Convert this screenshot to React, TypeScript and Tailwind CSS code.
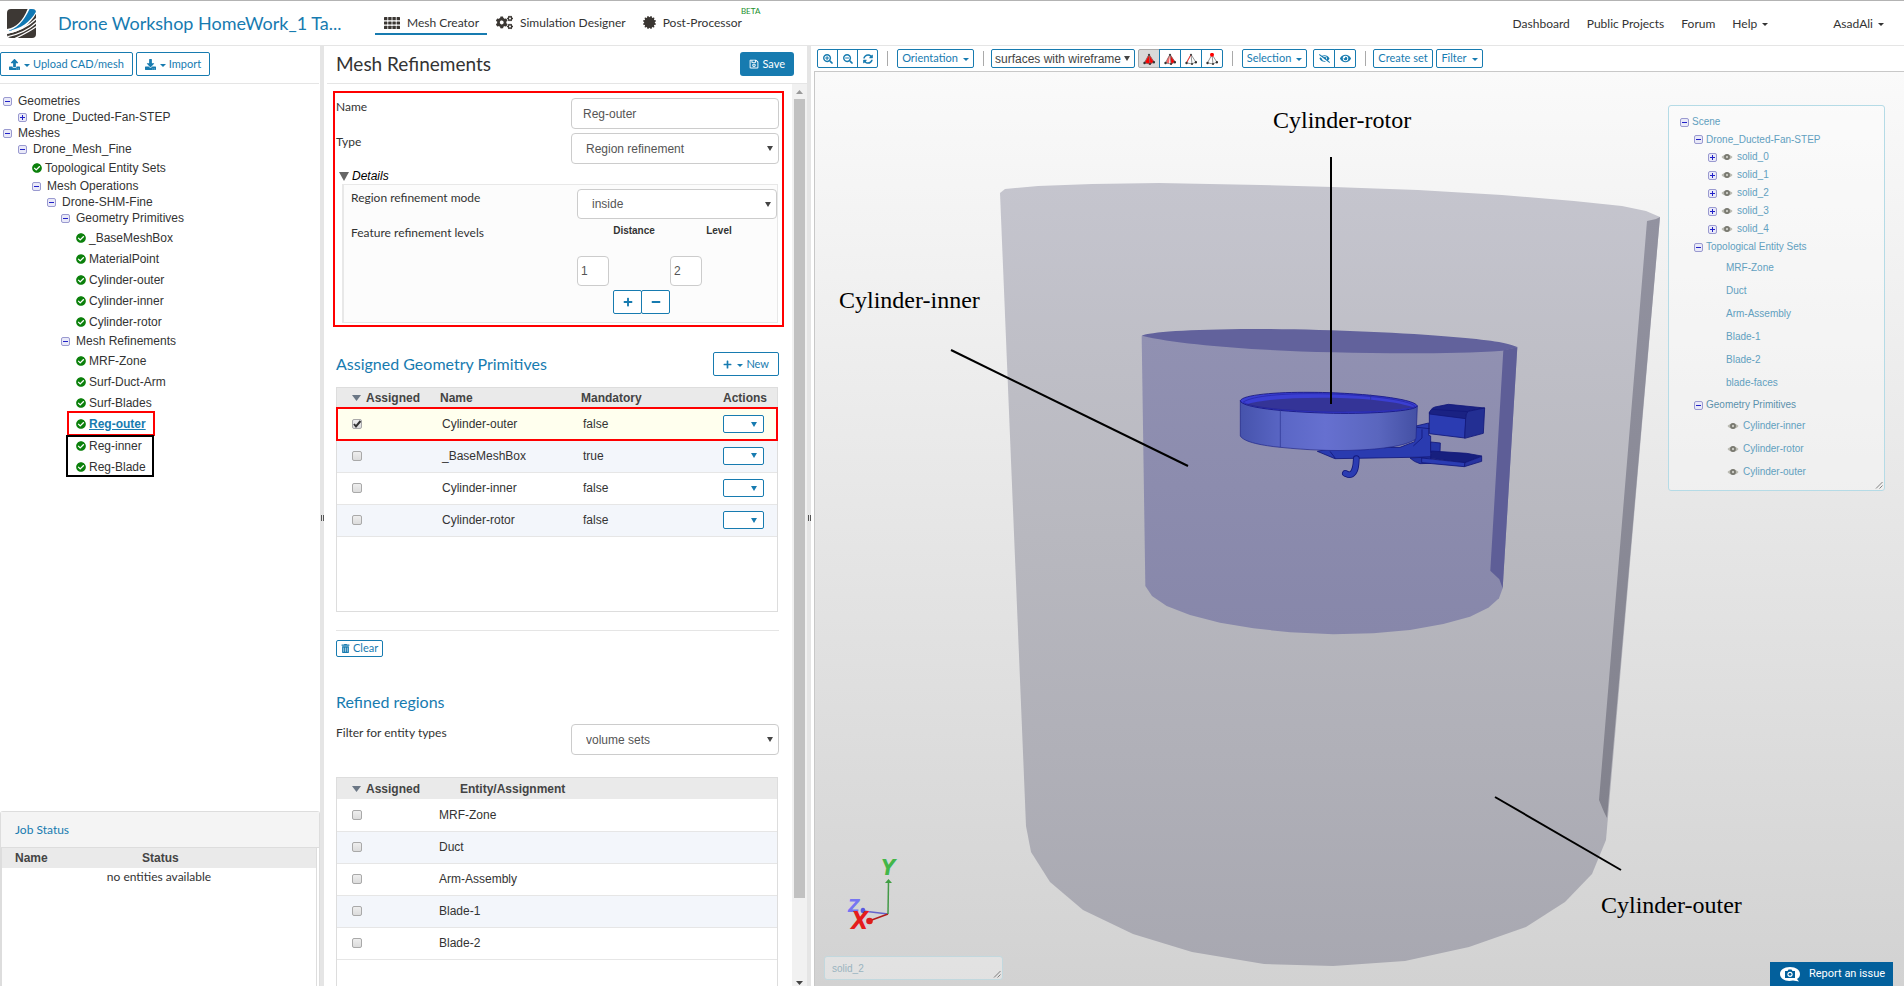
import React from 'react';
import {
  FaCertificate,
  FaCheckCircle,
  FaCogs,
  FaDownload,
  FaEye,
  FaEyeSlash,
  FaMinus,
  FaPlus,
  FaRegSave,
  FaSearchMinus,
  FaSearchPlus,
  FaSyncAlt,
  FaTrashAlt,
  FaUpload,
} from 'react-icons/fa';

const SANS = "font-['Liberation_Sans',Arial,sans-serif]";

function Caret() {
  return (
    <svg viewBox="0 0 6 3" className="mt-[2px] h-[3px] w-[6px] shrink-0" aria-hidden="true">
      <path d="M0 0h6L3 3z" fill="currentColor" />
    </svg>
  );
}

function Toggle({ open }: { open: boolean }) {
  return (
    <svg viewBox="0 0 9 9" className="size-[9px] shrink-0" aria-hidden="true">
      <rect x="0.5" y="0.5" width="8" height="8" rx="1.5" fill="#e9e9f8" stroke="#9a9ad0" />
      <path d="M2 4.5h5" stroke="#2222c8" strokeWidth="1" />
      {!open && <path d="M4.5 2v5" stroke="#2222c8" strokeWidth="1" />}
    </svg>
  );
}

type FolderProps = { label: string; level: number; kind: 'open' | 'closed' };

const FOLDER_INDENT = ['pl-[3px]', 'pl-[18px]', 'pl-[32px]', 'pl-[47px]', 'pl-[61px]'];

function Folder({ label, level, kind }: FolderProps) {
  return (
    <li className={`flex h-4 items-center gap-[6px] ${FOLDER_INDENT[level]}`}>
      <button aria-label={`Toggle ${label}`} className="flex">
        <Toggle open={kind === 'open'} />
      </button>
      <span>{label}</span>
    </li>
  );
}

function Leaf({ label, active = false }: { label: string; active?: boolean }) {
  return (
    <li className="flex h-[21px] items-center">
      <a href="#" className={`flex items-center gap-[3px] ${active ? 'font-bold text-[#177bb0] underline' : ''}`}>
        <FaCheckCircle className="size-[10px] shrink-0 text-[#0b800b]" />
        {label}
      </a>
    </li>
  );
}

function Sidebar() {
  const outline =
    'flex h-6 items-center gap-[4px] rounded-[2px] border border-[#177bb0] px-2 text-[11px] whitespace-nowrap text-[#177bb0]';
  return (
    <aside className="flex w-80 shrink-0 flex-col bg-white">
      <div className="mr-px flex h-[38px] items-center gap-[3px] border-b border-[#e5e5e5] pb-px">
        <button className={outline}>
          <FaUpload className="size-[11px]" />
          <span className="flex items-center gap-[3px]">
            <Caret /> Upload CAD/mesh
          </span>
        </button>
        <button className={outline}>
          <FaDownload className="size-[11px]" />
          <span className="flex items-center gap-[3px]">
            <Caret /> Import
          </span>
        </button>
      </div>
      <ul className={`min-h-0 flex-1 overflow-hidden pt-[9px] text-[12px] leading-4 text-[#333] ${SANS}`}>
        <Folder label="Geometries" level={0} kind="open" />
        <Folder label="Drone_Ducted-Fan-STEP" level={1} kind="closed" />
        <Folder label="Meshes" level={0} kind="open" />
        <Folder label="Drone_Mesh_Fine" level={1} kind="open" />
        <li>
          <ul className="pl-8">
            <Leaf label="Topological Entity Sets" />
          </ul>
        </li>
        <Folder label="Mesh Operations" level={2} kind="open" />
        <Folder label="Drone-SHM-Fine" level={3} kind="open" />
        <Folder label="Geometry Primitives" level={4} kind="open" />
        <li>
          <ul className="py-px pl-[76px]">
            {['_BaseMeshBox', 'MaterialPoint', 'Cylinder-outer', 'Cylinder-inner', 'Cylinder-rotor'].map((n) => (
              <Leaf key={n} label={n} />
            ))}
          </ul>
        </li>
        <Folder label="Mesh Refinements" level={4} kind="open" />
        <li>
          <ul className="pt-px pl-[76px]">
            <Leaf label="MRF-Zone" />
            <Leaf label="Surf-Duct-Arm" />
            <Leaf label="Surf-Blades" />
          </ul>
          <ul className="ml-[69px] w-[84px] pl-[7px] outline-2 outline-[#f00]">
            <Leaf label="Reg-outer" active />
          </ul>
          <ul className="mt-px ml-[66px] w-[88px] pl-[10px] outline-2 -outline-offset-2 outline-black">
            <Leaf label="Reg-inner" />
            <Leaf label="Reg-Blade" />
          </ul>
        </li>
      </ul>
      <section className="flex h-[175px] shrink-0 flex-col rounded-t-[3px] border border-b-0 border-[#ddd]">
        <h2 className="flex h-[36px] items-center border-b border-[#ddd] bg-[#f4f4f4] px-[14px] pt-px text-[12px] text-[#177bb0]">
          Job Status
        </h2>
        <div className="mr-[2px] flex-1 border-x border-[#ddd]">
          <table className="w-full table-fixed text-[12px] text-[#333]">
            <thead className={`bg-[#eaeaea] text-left text-[#444] ${SANS}`}>
              <tr className="h-[20px]">
                <th className="w-[127px] pl-[13px]">Name</th>
                <th className="pl-[13px]">Status</th>
              </tr>
            </thead>
            <tbody>
              <tr>
                <td colSpan={2} className="text-center leading-[18px]">
                  no entities available
                </td>
              </tr>
            </tbody>
          </table>
        </div>
      </section>
    </aside>
  );
}

function Splitter() {
  return (
    <div className="flex w-1 shrink-0 flex-col items-center bg-[#e5e5e5] pt-[469px]">
      <svg viewBox="0 0 4 6" className="h-[6px] w-1" aria-hidden="true">
        <path d="M1.500 0v6M3.500 0v6" stroke="#555" strokeWidth="1" />
      </svg>
    </div>
  );
}

function Logo() {
  return (
    <svg viewBox="0 0 29 29" className="size-[29px]" aria-label="SimScale">
      <defs>
        <clipPath id="logo-clip">
          <rect width="29" height="29" rx="4" />
        </clipPath>
      </defs>
      <g clipPath="url(#logo-clip)">
        <rect width="29" height="29" fill="#3d3834" />
        <path d="M-1 20C9 19 16 12 21-1L30-1L30 3C24 14 15 23-1 25Z" fill="#fff" />
        <path d="M0 22C10 20 17 12 23-1L30-1L30 1C24 12 15 20 0 22Z" fill="#0f78b4" />
        <path d="M-1 24.500C14 22 23 16 30 9" fill="none" stroke="#fff" strokeWidth="1.300" />
        <path d="M7 30C13 27 22 23 30 17" fill="none" stroke="#fff" strokeWidth="1.300" />
        <path d="M-1 28C10 26 22 21 30 13" fill="none" stroke="#fff" strokeWidth="1.300" />
      </g>
    </svg>
  );
}

function GridIcon() {
  return (
    <svg viewBox="0 0 16 12" className="h-3 w-4" fill="#3a3632" aria-hidden="true">
      {[0, 4.2, 8.4, 12.6].map((x) =>
        [0, 4.4, 8.8].map((y) => <rect key={`${x}-${y}`} x={x} y={y} width="3.400" height="3.200" rx="0.500" />),
      )}
    </svg>
  );
}

function Header() {
  const tab = 'flex h-[22px] items-center gap-[7px] border-b-2 pl-[9px] pr-2';
  return (
    <header className="flex h-[46px] shrink-0 items-center border-t border-b border-t-[#b3b3b3] border-b-[#e5e5e5] bg-white pl-[7px] text-[13px] text-[#333]">
      <Logo />
      <h1 className="ml-[22px] w-[317px] text-[18px] text-[#177bb0]">Drone Workshop HomeWork_1 Ta...</h1>
      <nav className="flex items-center pt-px text-[12px]" aria-label="Workbench">
        <a href="#" className={`${tab} border-[#177bb0]`}>
          <GridIcon />
          Mesh Creator
        </a>
        <a href="#" className={`${tab} border-transparent`}>
          <FaCogs className="size-[17px] text-[#3a3632]" />
          Simulation Designer
        </a>
        <a href="#" className={`${tab} relative border-transparent`}>
          <FaCertificate className="size-[13px] text-[#3a3632]" />
          Post-Processor
          <span className="absolute -top-[8px] left-[calc(100%-9px)] text-[8px] leading-3 text-[#1d8f2d]">BETA</span>
        </a>
      </nav>
      <nav className="ml-auto flex items-center gap-[17px] pt-px pr-5 text-[12px]" aria-label="Account">
        <a href="#">Dashboard</a>
        <a href="#">Public Projects</a>
        <a href="#">Forum</a>
        <a href="#" className="flex items-center gap-[5px]">
          Help <Caret />
        </a>
        <a href="#" className="ml-12 flex items-center gap-[5px]">
          AsadAli <Caret />
        </a>
      </nav>
    </header>
  );
}

function Dropdown({ id, value, className }: { id: string; value: string; className: string }) {
  return (
    <span className="grid items-center">
      <select
        id={id}
        className={`appearance-none rounded-[4px] border border-[#ccc] bg-white pl-[14px] text-[12px] text-[#555] [grid-area:1/1] ${SANS} ${className}`}
      >
        <option>{value}</option>
      </select>
      <svg
        viewBox="0 0 6 5"
        className="pointer-events-none mr-[6px] h-[5px] w-[6px] justify-self-end [grid-area:1/1]"
        aria-hidden="true"
      >
        <path d="M0 0h6L3 5z" fill="#444" />
      </svg>
    </span>
  );
}

function Check({ checked = false, label }: { checked?: boolean; label: string }) {
  return (
    <span className="grid size-[11px] place-items-center">
      <input
        type="checkbox"
        defaultChecked={checked}
        aria-label={label}
        className="peer size-[10px] appearance-none rounded-[2px] border border-[#a9a9a9] bg-linear-to-b from-[#eee] to-[#dcdcdc] [grid-area:1/1]"
      />
      <svg viewBox="0 0 10 10" className="pointer-events-none invisible z-10 size-[10px] peer-checked:visible [grid-area:1/1]">
        <path d="M2 5l2 2.500L8.500 2" fill="none" stroke="#333" strokeWidth="2" />
      </svg>
    </span>
  );
}

function SortArrow() {
  return (
    <svg viewBox="0 0 9 6" className="h-[6px] w-[9px]" aria-hidden="true">
      <path d="M0 0h9L4.500 6z" fill="#6b7785" />
    </svg>
  );
}

const PRIMITIVES = [
  { name: 'Cylinder-outer', mandatory: 'false', checked: true },
  { name: '_BaseMeshBox', mandatory: 'true', checked: false },
  { name: 'Cylinder-inner', mandatory: 'false', checked: false },
  { name: 'Cylinder-rotor', mandatory: 'false', checked: false },
];

const REGIONS = ['MRF-Zone', 'Duct', 'Arm-Assembly', 'Blade-1', 'Blade-2'];

function PrimitivesTable() {
  return (
    <div className="mr-px min-h-[225px] border border-[#ddd]">
      <table className={`w-full table-fixed border-collapse text-left text-[12px] text-[#333] ${SANS}`}>
        <thead className="bg-[#eaeaea] text-[#444]">
          <tr className="h-5">
            <th className="w-[103px] pl-[15px]">
              <span className="flex items-center gap-[5px]">
                <SortArrow /> Assigned
              </span>
            </th>
            <th className="w-[141px]">Name</th>
            <th>Mandatory</th>
            <th className="w-[54px]">Actions</th>
          </tr>
        </thead>
        <tbody>
          {PRIMITIVES.map((p) => (
            <tr
              key={p.name}
              className={
                p.checked
                  ? 'h-8 bg-[#ffffee] outline-2 -outline-offset-1 outline-[#f00]'
                  : 'h-8 border-b border-[#e6e6e6] even:bg-[#f3f6fb]'
              }
            >
              <td className="pl-[14px]">
                <Check checked={p.checked} label={`Assign ${p.name}`} />
              </td>
              <td className="pl-[2px]">{p.name}</td>
              <td className="pl-[2px]">{p.mandatory}</td>
              <td>
                <button
                  aria-label={`Actions for ${p.name}`}
                  className="flex h-[18px] w-[41px] items-center justify-end rounded-[2px] border border-[#177bb0] bg-white pr-[6px]"
                >
                  <svg viewBox="0 0 6 5" className="h-[5px] w-[6px]" aria-hidden="true">
                    <path d="M0 0h6L3 5z" fill="#177bb0" />
                  </svg>
                </button>
              </td>
            </tr>
          ))}
        </tbody>
      </table>
    </div>
  );
}

function RegionsTable() {
  return (
    <div className="mr-px h-[260px] shrink-0 border border-[#ddd]">
      <table className={`w-full table-fixed border-collapse text-left text-[12px] text-[#333] ${SANS}`}>
        <thead className="bg-[#eaeaea] text-[#444]">
          <tr className="h-[21px]">
            <th className="w-[102px] pl-[15px]">
              <span className="flex items-center gap-[5px]">
                <SortArrow /> Assigned
              </span>
            </th>
            <th className="pl-[21px]">Entity/Assignment</th>
          </tr>
        </thead>
        <tbody>
          {REGIONS.map((r) => (
            <tr key={r} className="h-8 border-b border-[#e6e6e6] even:bg-[#f3f6fb]">
              <td className="pl-[14px]">
                <Check label={`Assign ${r}`} />
              </td>
              <td>{r}</td>
            </tr>
          ))}
        </tbody>
      </table>
    </div>
  );
}

function RefinementForm() {
  const step = 'grid h-6 w-[29px] place-items-center rounded-[2px] border border-[#177bb0] bg-white text-[#177bb0]';
  const field = `rounded-[4px] border border-[#ccc] bg-white text-[12px] text-[#555] ${SANS}`;
  return (
    <div className="mr-2 -ml-[3px] border-2 border-[#f00] pt-[5px] pr-0 pb-[2px] pl-px">
      <div className="mr-[3px] mb-1 flex items-start justify-between">
        <label htmlFor="name" className="leading-[18px]">
          Name
        </label>
        <input id="name" defaultValue="Reg-outer" className={`h-[31px] w-[208px] px-[11px] ${field}`} />
      </div>
      <div className="mr-[3px] mb-[3px] flex items-start justify-between">
        <label htmlFor="type" className="leading-[18px]">
          Type
        </label>
        <Dropdown id="type" value="Region refinement" className="h-[31px] w-[208px]" />
      </div>
      <details open className="pl-[3px]">
        <summary className={`flex h-[17px] list-none items-center gap-[3px] pt-px text-[12px] text-black italic ${SANS}`}>
          <svg viewBox="0 0 10 9" className="h-[9px] w-[10px]" aria-hidden="true">
            <path d="M0 0h10L5 9z" fill="#666" />
          </svg>
          Details
        </summary>
        <div className="mr-[4px] ml-[3px] border border-l-2 border-[#e8e8e8] bg-[#fcfcfc] pt-1 pb-2 pl-[7px]">
          <div className="mb-[5px] flex items-start justify-between">
            <label htmlFor="mode" className="leading-[18px]">
              Region refinement mode
            </label>
            <Dropdown id="mode" value="inside" className="h-[30px] w-[200px]" />
          </div>
          <div className="flex items-start justify-between">
            <span className="leading-[18px]">Feature refinement levels</span>
            <div className="w-[200px]">
              <table className={`w-[186px] table-fixed text-[10px] ${SANS}`}>
                <thead>
                  <tr className="h-8 align-top leading-[14px]">
                    <th className="w-[93px] pl-[21px]">Distance</th>
                    <th className="pl-[5px]">Level</th>
                  </tr>
                </thead>
                <tbody>
                  <tr>
                    <td>
                      <input aria-label="Distance" defaultValue="1" className={`h-[30px] w-8 px-[3px] ${field}`} />
                    </td>
                    <td>
                      <input aria-label="Level" defaultValue="2" className={`h-[30px] w-8 px-[3px] ${field}`} />
                    </td>
                  </tr>
                </tbody>
              </table>
              <div className="flex pt-1 pl-9">
                <button className={step} aria-label="Add level">
                  <FaPlus className="size-[10px]" />
                </button>
                <button className={`-ml-px ${step}`} aria-label="Remove level">
                  <FaMinus className="size-[10px]" />
                </button>
              </div>
            </div>
          </div>
        </div>
      </details>
    </div>
  );
}

function Settings() {
  return (
    <main className="flex w-[483px] shrink-0 flex-col bg-white text-[12px] text-[#333]">
      <div className="ml-[3px] flex h-[38px] shrink-0 items-center justify-between border-b border-[#e5e5e5] pr-[13px] pb-px pl-[9px]">
        <h2 className="text-[19px] leading-6">Mesh Refinements</h2>
        <button className="flex h-6 items-center gap-[3px] rounded-[3px] bg-[#177bb0] px-[9px] text-[11px] text-white">
          <FaRegSave className="size-[10px]" />
          Save
        </button>
      </div>
      <div className="flex min-h-0 flex-1">
        <div className="flex min-w-0 flex-1 flex-col overflow-hidden pt-[7px] pl-3">
          <RefinementForm />
          <div className="flex shrink-0 flex-col pr-[13px]">
            <div className="mt-[25px] mb-[11px] flex items-center justify-between">
              <h3 className="text-[16px] text-[#177bb0]">Assigned Geometry Primitives</h3>
              <button className="flex h-6 items-center gap-[5px] rounded-[2px] border border-[#177bb0] px-[9px] text-[11px] text-[#177bb0]">
                <FaPlus className="size-[9px]" />
                <span className="flex items-center gap-[3px]">
                  <Caret /> New
                </span>
              </button>
            </div>
            <PrimitivesTable />
            <hr className="mt-[18px] mb-[9px] border-[#e5e5e5]" />
            <button className="flex h-[17px] items-center gap-[3px] self-start rounded-[2px] border border-[#177bb0] px-1 text-[11px] text-[#177bb0]">
              <FaTrashAlt className="size-[9px]" />
              Clear
            </button>
            <h3 className="mt-[33px] text-[16px] leading-6 text-[#177bb0]">Refined regions</h3>
            <div className="mt-[10px] mb-[22px] flex items-start justify-between">
              <label htmlFor="filter" className="leading-[18px]">
                Filter for entity types
              </label>
              <Dropdown id="filter" value="volume sets" className="h-[31px] w-[208px]" />
            </div>
            <RegionsTable />
          </div>
        </div>
        <div className="flex w-[15px] shrink-0 flex-col items-center bg-[#f1f1f1] pt-[6px] pb-px" aria-hidden="true">
          <svg viewBox="0 0 7 4" className="mb-[5px] h-1 w-[7px]">
            <path d="M0 4h7L3.500 0z" fill="#999" />
          </svg>
          <div className="w-[11px] flex-[800] bg-[#c1c1c1]" />
          <div className="flex-[83]" />
          <svg viewBox="0 0 7 4" className="h-1 w-[7px]">
            <path d="M0 0h7L3.500 4z" fill="#444" />
          </svg>
        </div>
      </div>
    </main>
  );
}

function PickIcon({ mode }: { mode: 'volume' | 'face' | 'edge' | 'node' }) {
  return (
    <svg viewBox="0 0 12 12" className="size-3" aria-hidden="true">
      {mode === 'volume' && <path d="M6 1L1 10l6 1.500L11.500 9z" fill="#f00" />}
      {mode === 'face' && <path d="M6 1L7 11.500 11.500 9z" fill="#f00" />}
      {mode === 'face' && <path d="M6 1L3 6 2 10l3 .5z" fill="#f66" />}
      <path d="M6 1.500L1.500 9.800 7 11 10.800 9zM6 1.500L7 11" fill="none" stroke="#777" strokeWidth="0.800" />
      {mode === 'edge' && <path d="M6 1.500L1.500 9.800" stroke="#f33" strokeWidth="1" />}
      <circle cx="6" cy="1.800" r={mode === 'node' ? 2 : 1.1} fill={mode === 'node' ? '#f00' : '#444'} />
      <circle cx="1.500" cy="10" r="1.200" fill="#333" />
      <circle cx="7" cy="11" r="1" fill="#333" />
      <circle cx="10.900" cy="9.200" r="1.200" fill="#333" />
    </svg>
  );
}

function Toolbar() {
  const base = 'flex h-[19px] items-center justify-center border border-[#177bb0] text-[#177bb0]';
  const word = `${base} gap-[5px] rounded-[2px] px-1 whitespace-nowrap`;
  const sep = 'h-[15px] w-px shrink-0 bg-[#aaa]';
  return (
    <div className="flex h-[25px] shrink-0 items-center pl-[6px] text-[11px]" role="toolbar">
      <button aria-label="Zoom in" className={`${base} w-[21px] rounded-l-[2px]`}>
        <FaSearchPlus className="size-[10px]" />
      </button>
      <button aria-label="Zoom out" className={`${base} -ml-px w-[21px]`}>
        <FaSearchMinus className="size-[10px]" />
      </button>
      <button aria-label="Reset view" className={`${base} -ml-px w-[21px] rounded-r-[2px]`}>
        <FaSyncAlt className="size-[10px]" />
      </button>
      <span className={`${sep} mr-[9px] ml-[9px]`} />
      <button className={`${word} w-[77px]`}>
        Orientation <Caret />
      </button>
      <span className={`${sep} mr-[7px] ml-[9px]`} />
      <span className="grid items-center">
        <select
          aria-label="Display mode"
          className={`h-[19px] w-36 appearance-none rounded-[2px] border border-[#177bb0] bg-white pl-[3px] text-[12px] text-[#444] [grid-area:1/1] ${SANS}`}
        >
          <option>surfaces with wireframe</option>
        </select>
        <svg
          viewBox="0 0 6 5"
          className="pointer-events-none mr-[5px] h-[5px] w-[6px] justify-self-end [grid-area:1/1]"
          aria-hidden="true"
        >
          <path d="M0 0h6L3 5z" fill="#444" />
        </svg>
      </span>
      <button aria-label="Pick volumes" className={`${base} ml-[3px] w-[22px] rounded-l-[2px] border-[#aaa] bg-[#d9d9d9]`}>
        <PickIcon mode="volume" />
      </button>
      <button aria-label="Pick faces" className={`${base} -ml-px w-[22px]`}>
        <PickIcon mode="face" />
      </button>
      <button aria-label="Pick edges" className={`${base} -ml-px w-[22px]`}>
        <PickIcon mode="edge" />
      </button>
      <button aria-label="Pick nodes" className={`${base} -ml-px w-[22px] rounded-r-[2px]`}>
        <PickIcon mode="node" />
      </button>
      <span className={`${sep} mr-[9px] ml-[9px]`} />
      <button className={`${word} w-[65px]`}>
        Selection <Caret />
      </button>
      <button aria-label="Hide selection" className={`${base} ml-[6px] w-[22px] rounded-l-[2px]`}>
        <FaEyeSlash className="size-[11px]" />
      </button>
      <button aria-label="Show all" className={`${base} -ml-px w-[22px] rounded-r-[2px]`}>
        <FaEye className="size-[11px]" />
      </button>
      <span className={`${sep} mr-[7px] ml-[9px]`} />
      <button className={`${word} w-[60px]`}>Create set</button>
      <button className={`${word} ml-[3px] w-[47px]`}>
        Filter <Caret />
      </button>
    </div>
  );
}

function Scene() {
  return (
    <svg
      viewBox="815 72 1089 914"
      preserveAspectRatio="xMidYMid slice"
      className="block size-full"
      role="img"
      aria-label="Mesh view"
    >
      <defs>
        <linearGradient id="outer" x1="0" y1="0" x2="0" y2="1">
          <stop offset="0" stopColor="#c5c5ce" />
          <stop offset="0.450" stopColor="#b8b8bf" />
          <stop offset="1" stopColor="#a8a8b1" />
        </linearGradient>
        <linearGradient id="outer-side" x1="0" y1="0" x2="0" y2="1">
          <stop offset="0" stopColor="#9292a0" />
          <stop offset="1" stopColor="#82828d" />
        </linearGradient>
        <linearGradient id="inner" x1="0" y1="0" x2="0" y2="1">
          <stop offset="0" stopColor="#9191b2" />
          <stop offset="1" stopColor="#8787aa" />
        </linearGradient>
        <linearGradient id="duct" x1="0" y1="0" x2="1" y2="0">
          <stop offset="0" stopColor="#4653ac" />
          <stop offset="0.250" stopColor="#5b67c6" />
          <stop offset="0.480" stopColor="#6670d0" />
          <stop offset="0.780" stopColor="#5a66be" />
          <stop offset="1" stopColor="#4450a4" />
        </linearGradient>
      </defs>

      <polygon
        fill="url(#outer)"
        points="1000,193 1005,189 1038,186 1092,184 1159,183 1261,185 1333,187 1418,190 1502,195 1574,201 1622,206 1646,211 1660,217 1606,840 1592,874 1565,902 1526,927 1469,947 1405,961 1333,966 1264,964 1192,952 1133,934 1083,910 1050,882 1031,852 1026,826"
      />
      <polygon fill="url(#outer-side)" points="1647,221 1656,219 1660,217 1607,818 1604,812 1599,800" />

      <g transform="translate(1120 310) scale(0.33333)">
        <polygon
          fill="url(#inner)"
          points="65,78 1192,110 1148,835 1137,865 1105,893 1050,920 970,942 870,960 760,970 640,973 510,967 400,955 300,938 210,915 140,888 96,858 76,828"
        />
        <path
          fill="#62629c"
          d="M65 77C90 66 200 58 400 57C600 57 850 68 1000 81C1100 89 1170 98 1192 112L1148 122C1000 132 820 131 640 127C400 121 180 104 65 77Z"
        />
        <polygon fill="#5e5e97" points="1150,121 1192,112 1148,835 1138,808 1111,782" />

        <g stroke="#12187a" strokeWidth="2.500" strokeLinejoin="round">
          <polygon fill="#2a3bb0" points="888,348 926,339 926,376 932,378 932,441 645,446 592,424 640,415 840,412 884,395" />
          <path d="M630 424L646 445M906 358V384L880 408M890 352L930 356" fill="none" />
          <path d="M870 444L932 441V460L900 461Q882 456 870 444Z" fill="#2433a4" />
          <polygon fill="#2535a6" points="932,396 961,399 960,427 932,427" />
          <polygon fill="#171f7e" points="934,423 1040,430 1085,438 1035,458 932,445" />
          <polygon fill="#2b3cb2" points="905,444 1035,458 1033,470 905,458" />
          <polygon fill="#2733a0" points="1035,458 1085,439 1085,454 1033,470" />
          <polygon fill="#2b3cb2" points="928,306 1038,324 1034,384 928,371" />
          <path fill="#1a2283" d="M928 312Q930 296 945 291L985 283L1094 294L1045 304Q1038 310 1037 326Z" />
          <path fill="none" d="M936 298L1045 305" />
          <path fill="#232f93" d="M1037 326Q1038 308 1045 304L1094 294L1090 370L1034 385Z" />
        </g>
        <path d="M709 446C708 470 706 486 694 493C686 497 681 492 676 490" fill="none" stroke="#12187a" strokeWidth="20" strokeLinecap="round" />
        <path d="M709 446C708 470 706 486 694 493C686 497 681 492 676 490" fill="none" stroke="#2b3cb2" strokeWidth="15" strokeLinecap="round" />

        <path
          fill="url(#duct)"
          stroke="#1c2288"
          strokeWidth="2"
          d="M361 272V378C372 397 430 407 481 412C560 420 640 424 720 420C800 416 866 405 888 386L892 288Z"
        />
        <path fill="#3b3fd2" stroke="#15157e" strokeWidth="2.500" d="M361 272C368 254 470 246 570 247C700 247 885 264 892 288C888 303 760 312 640 310C480 306 364 292 361 272Z" />
        <path fill="#343497" d="M376 284C430 268 520 263 600 263C700 263 820 270 880 292C820 303 720 306 640 305C540 304 430 298 376 284Z" />
        <path d="M370 276C400 256 500 251 570 251C700 251 868 266 886 290C850 303 740 307 640 306C480 303 384 290 370 276Z" fill="none" stroke="#1b1b90" strokeWidth="1.500" />
        <path d="M481 298V412M752 254V269" stroke="#2b3390" strokeWidth="2" />
      </g>

      <g stroke="#000" strokeWidth="2">
        <path d="M1331 157V404" />
        <path d="M951 350L1188 466" />
        <path d="M1495 797L1621 870" />
      </g>
      <g fontFamily="'Liberation Serif', 'Times New Roman', serif" fontSize="24" fill="#000">
        <text x="1273" y="128">Cylinder-rotor</text>
        <text x="839" y="308">Cylinder-inner</text>
        <text x="1601" y="913">Cylinder-outer</text>
      </g>

      <g fill="none" strokeWidth="1.500">
        <path d="M888 914L863 911" stroke="#6464cc" />
        <path d="M888 914L869 921" stroke="#b01c1c" />
        <path d="M888 914L888.500 881" stroke="#449a48" />
      </g>
      <path d="M885 883L888.500 879L892 883Z" fill="#3f9f43" />
      <ellipse cx="863" cy="910.500" rx="2.300" ry="2.800" fill="#5a5ae0" />
      <circle cx="869.500" cy="921" r="3.300" fill="#dd1c1c" />
      <g fontFamily="'DejaVu Sans Condensed', 'DejaVu Sans', sans-serif" fontWeight="700" fontStyle="italic">
        <text x="881" y="875" fontSize="22" fill="#43b649">Y</text>
        <text x="848" y="912" fontSize="18" fill="#7676f2">Z</text>
        <text x="851" y="929" fontSize="25" fill="#e51c1c">X</text>
      </g>
    </svg>
  );
}

function Grip() {
  return (
    <svg viewBox="0 0 8 8" className="absolute right-px bottom-px size-2" aria-hidden="true">
      <path d="M1 7.500L7.500 1M4.500 7.500L7.500 4.500" stroke="#666" strokeWidth="0.800" fill="none" />
    </svg>
  );
}

function EyeIcon() {
  return (
    <svg viewBox="0 0 12 8" className="h-2 w-3 shrink-0" aria-hidden="true">
      <path d="M0.500 4C3 0.500 9 0.500 11.500 4C9 7.500 3 7.500 0.500 4Z" fill="#b9b9b0" />
      <circle cx="6" cy="4" r="2.900" fill="#77776e" />
      <circle cx="6" cy="4" r="1.200" fill="#c9c9c2" />
    </svg>
  );
}

function SceneTree() {
  return (
    <div
      className={`absolute top-[33px] right-[19px] h-[386px] w-[217px] rounded-[3px] border border-[#b5dbe6] bg-white/35 pt-[7px] text-[10px] leading-[18px] text-[#62a0bf] ${SANS}`}
    >
      <ul>
        <li className="flex h-[18px] items-center gap-[3px] pl-[11px]">
          <Toggle open /> Scene
        </li>
        <li className="flex h-[17px] items-center gap-[3px] pl-[25px]">
          <Toggle open /> Drone_Ducted-Fan-STEP
        </li>
        {['solid_0', 'solid_1', 'solid_2', 'solid_3', 'solid_4'].map((s) => (
          <li key={s} className="flex h-[18px] items-center gap-[4px] pl-[39px]">
            <Toggle open={false} />
            <EyeIcon />
            {s}
          </li>
        ))}
        <li className="flex h-[18px] items-center gap-[3px] pl-[25px]">
          <Toggle open /> Topological Entity Sets
        </li>
        <li>
          <ul className="pb-[2px] pl-[57px] leading-[23px]">
            {['MRF-Zone', 'Duct', 'Arm-Assembly', 'Blade-1', 'Blade-2', 'blade-faces'].map((s) => (
              <li key={s}>{s}</li>
            ))}
          </ul>
        </li>
        <li className="flex h-[18px] items-center gap-[3px] pl-[25px] text-[#5b91ac]">
          <Toggle open /> Geometry Primitives
        </li>
        <li>
          <ul className="pl-[58px] leading-[23px]">
            {['Cylinder-inner', 'Cylinder-rotor', 'Cylinder-outer'].map((s) => (
              <li key={s} className="flex items-center gap-1">
                <EyeIcon />
                {s}
              </li>
            ))}
          </ul>
        </li>
      </ul>
      <Grip />
    </div>
  );
}

function Viewer() {
  return (
    <section className="flex min-w-0 flex-1 flex-col bg-white">
      <Toolbar />
      <div className="relative ml-[3px] min-h-0 flex-1 overflow-hidden border-t border-l border-[#c8c8c8] bg-linear-to-b from-[#fafafa] to-[#d2d2d2]">
        <Scene />
        <SceneTree />
        <div
          className={`absolute bottom-[6px] left-[9px] flex h-6 w-[179px] items-center rounded-[3px] border border-[#c2d8de] bg-white/35 pl-[7px] text-[10px] text-[#9ab4c0] ${SANS}`}
        >
          solid_2
          <Grip />
        </div>
        <button className="absolute right-[11px] bottom-0 flex h-[24px] w-[123px] items-center gap-2 bg-[#03609c] pl-[9px] font-['Roboto',sans-serif] text-[11px] whitespace-nowrap text-white">
          <svg viewBox="0 0 22 16" className="h-4 w-[22px] shrink-0" aria-hidden="true">
            <path d="M11 1C17 1 21 4 21 8C21 10 20 12 18 13L20 15.500L14 14.500C7 16 1 13 1 8C1 4 5 1 11 1Z" fill="#fff" />
            <path d="M6 5h2.500l1-1.500h3l1 1.500H16v7H6z" fill="#03609c" />
            <circle cx="11" cy="8.300" r="2.600" fill="#fff" />
            <circle cx="11" cy="8.300" r="1.400" fill="#03609c" />
          </svg>
          Report an issue
        </button>
      </div>
    </section>
  );
}

export default function App() {
  return (
    <div className="flex h-screen flex-col overflow-hidden bg-white font-['Lato',sans-serif]">
      <Header />
      <div className="flex min-h-0 flex-1">
        <Sidebar />
        <Splitter />
        <Settings />
        <Splitter />
        <Viewer />
      </div>
    </div>
  );
}
